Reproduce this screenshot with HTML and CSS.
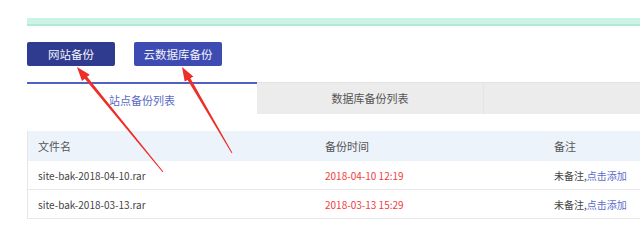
FILE: index.html
```html
<!DOCTYPE html>
<html lang="zh-CN">
<head>
  <meta charset="UTF-8" />
  <title>备份管理</title>
  <link rel="stylesheet" href="styles.css">
</head>
<body>

<div class="page">

  <div class="notice-bar"></div>

  <!-- backup actions -->
  <div class="actions">
    <button class="btn btn-site">网站备份</button>
    <button class="btn btn-db">云数据库备份</button>
  </div>

  <!-- tabs -->
  <div class="tabs">
    <div class="tab active">站点备份列表</div>
    <div class="tab">数据库备份列表</div>
    <div class="tab tab-rest"></div>
  </div>

  <!-- backup list -->
  <table class="backup-table">
    <thead>
      <tr>
        <th class="col-name">文件名</th>
        <th class="col-time">备份时间</th>
        <th>备注</th>
      </tr>
    </thead>
    <tbody>
      <tr>
        <td>site-bak-2018-04-10.rar</td>
        <td class="time">2018-04-10 12:19</td>
        <td>未备注,<a href="#" class="add-note">点击添加</a></td>
      </tr>
      <tr>
        <td>site-bak-2018-03-13.rar</td>
        <td class="time">2018-03-13 15:29</td>
        <td>未备注,<a href="#" class="add-note">点击添加</a></td>
      </tr>
    </tbody>
  </table>

</div>

<!-- annotation arrows drawn over the page -->
<svg class="arrows" width="640" height="244" viewBox="0 0 640 244">
  <polygon points="77,67 89.8,74.7 87.1,76.8 163.4,171.7 162.6,172.3 84.7,78.8 82,81" />
  <polygon points="182,67 193.3,76.6 190.4,78.3 232.4,152.7 231.6,153.3 187.6,79.9 184.7,81.6" />
</svg>

</body>
</html>
```

FILE: styles.css
```css
body {
  margin: 0;
  padding: 0;
  background: #fff;
  font-family: "Noto Sans CJK SC", "Noto Sans", sans-serif;
  font-size: 12px;
  color: #333;
  overflow: hidden;
  height: 244px;
}

.page {
  padding: 18px 0 0 27px;
}

.notice-bar {
  height: 6px;
  background: #cbf3e6;
  border-bottom: 2px solid #b3e9d7;
}

.actions {
  display: flex;
  gap: 19px;
  margin-top: 16px;
}

.btn {
  width: 88px;
  height: 24px;
  border: none;
  border-radius: 2px;
  color: #f2f3fa;
  font-family: inherit;
  font-size: 11.5px;
  padding: 0;
  cursor: pointer;
}

.btn-site {
  background: #2f3b8f;
}

.btn-db {
  background: #3d4bb2;
}

.tabs {
  display: flex;
  margin-top: 16px;
  height: 32px;
}

.tab {
  width: 226px;
  background: #ececec;
  border-top: 1px solid #e2e2e2;
  color: #555;
  font-size: 11px;
  line-height: 31px;
  text-align: center;
  box-sizing: border-box;
}

.tab.active {
  width: 230px;
  background: #fff;
  border-top: 2px solid #5262c2;
  color: #5b6bc4;
  line-height: 32px;
}

.tab-rest {
  flex: 1;
  border-left: 1px solid #e4e4e4;
}

.backup-table {
  margin-top: 17px;
  width: 640px;
  table-layout: fixed;
  border-collapse: collapse;
  border-left: 1px solid #e6e6e6;
}

.backup-table th {
  background: #edf3fb;
  height: 30px;
  padding: 0 0 0 10px;
  text-align: left;
  font-weight: normal;
  font-size: 11px;
  color: #555;
}

.backup-table td {
  height: 28px;
  padding: 0 0 0 10px;
  border-bottom: 1px solid #e8e8e8;
  font-size: 10px;
  color: #444;
  white-space: nowrap;
}

.col-name {
  width: 277px;
}

.col-time {
  width: 219px;
}

.time {
  color: #f03c3c !important;
}

.add-note {
  color: #5a6ccc;
  text-decoration: none;
}

.arrows {
  position: absolute;
  left: 0;
  top: 0;
  pointer-events: none;
}

.arrows polygon {
  fill: #ee2f28;
}
```
